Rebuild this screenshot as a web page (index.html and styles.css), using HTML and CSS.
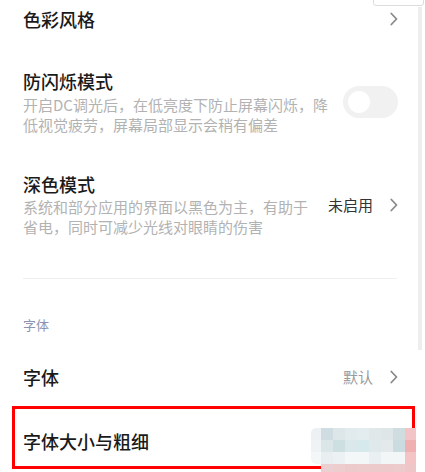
FILE: index.html
```html
<!DOCTYPE html>
<html lang="zh-CN">
<head>
<meta charset="utf-8">
<link rel="stylesheet" href="styles.css">
</head>
<body>
<div class="page">
  <div class="row row-first">
    <div class="title">色彩风格</div>
    <svg class="chev" width="8" height="14" viewBox="0 0 8 14"><path d="M1.3 1.5 L6.5 7 L1.3 12.5" fill="none" stroke="#8a8a8a" stroke-width="1.8" stroke-linecap="round" stroke-linejoin="round"/></svg>
  </div>

  <div class="row row-dc">
    <div class="col">
      <div class="title">防闪烁模式</div>
      <div class="desc">开启DC调光后，在低亮度下防止屏幕闪烁，降低视觉疲劳，屏幕局部显示会稍有偏差</div>
    </div>
    <div class="toggle"><span class="knob"></span></div>
  </div>

  <div class="row row-dark">
    <div class="col">
      <div class="title">深色模式</div>
      <div class="desc">系统和部分应用的界面以黑色为主，有助于省电，同时可减少光线对眼睛的伤害</div>
    </div>
    <div class="value value-dark">未启用</div>
    <svg class="chev" width="8" height="14" viewBox="0 0 8 14"><path d="M1.3 1.5 L6.5 7 L1.3 12.5" fill="none" stroke="#8a8a8a" stroke-width="1.8" stroke-linecap="round" stroke-linejoin="round"/></svg>
  </div>

  <div class="divider"></div>

  <div class="section">字体</div>

  <div class="row row-font">
    <div class="title">字体</div>
    <div class="value value-light">默认</div>
    <svg class="chev" width="8" height="14" viewBox="0 0 8 14"><path d="M1.3 1.5 L6.5 7 L1.3 12.5" fill="none" stroke="#8a8a8a" stroke-width="1.8" stroke-linecap="round" stroke-linejoin="round"/></svg>
  </div>

  <div class="row row-size">
    <div class="title">字体大小与粗细</div>
  </div>
</div>

<div class="topbox"></div>
<div class="scrollbar"></div>
<div class="highlight"></div>
<div class="mosaic">
  <span></span><span></span><span></span><span></span><span></span><span></span><span></span><span></span><span></span>
  <span></span><span></span><span></span><span></span><span></span><span></span><span></span><span></span><span></span>
  <span></span><span></span><span></span><span></span><span></span><span></span><span></span><span></span><span></span>
  <span></span><span></span><span></span><span></span><span></span><span></span><span></span><span></span><span></span>
</div>
</body>
</html>
```

FILE: styles.css
```css
html, body {
  margin: 0;
  padding: 0;
  background: #ffffff;
}
body {
  width: 425px;
  height: 472px;
  overflow: hidden;
  position: relative;
  font-family: "Noto Sans CJK SC", "Noto Sans", sans-serif;
}
.page {
  padding: 0 27px 0 23px;
}
.row {
  display: flex;
  align-items: center;
}
.row-first {
  height: 38px;
}
.row-dc {
  margin-top: 31px;
}
.row-dark {
  margin-top: 37px;
}
.row-font {
  margin-top: 31px;
}
.row-size {
  margin-top: 40px;
}
.title {
  font-size: 18px;
  line-height: 24px;
  font-weight: 500;
  color: #1a1a1a;
  flex: 1;
}
.col {
  flex: 1;
  min-width: 0;
}
.col .title {
  flex: none;
}
.desc {
  font-size: 15px;
  line-height: 20px;
  color: #b2b2b2;
  margin-top: 2px;
}
.row-dark .desc {
  margin-top: 1px;
}
.toggle {
  width: 55px;
  height: 32px;
  border-radius: 16px;
  background: #f1f1f1;
  margin-left: 8px;
  display: flex;
  align-items: center;
  padding-left: 5px;
  box-sizing: border-box;
}
.knob {
  width: 22px;
  height: 22px;
  border-radius: 50%;
  background: #ffffff;
}
.value {
  font-size: 15px;
  line-height: 20px;
  margin-right: 17px;
}
.value-dark {
  color: #333333;
  margin-left: 15px;
}
.value-light {
  color: #9a9a9a;
}
.chev {
  display: block;
  flex: none;
}
.divider {
  margin-top: 41px;
  height: 1px;
  background: #efefef;
  margin-right: 1px;
}
.section {
  margin-top: 37px;
  font-size: 13px;
  line-height: 18px;
  color: #8c93b0;
}
.topbox {
  position: absolute;
  left: 373px;
  top: -4px;
  width: 51px;
  height: 10px;
  border: 1px solid #dcdcdc;
  border-radius: 0 0 3px 3px;
  box-sizing: border-box;
  background: #fff;
}
.scrollbar {
  position: absolute;
  left: 418px;
  top: 7px;
  width: 4px;
  height: 343px;
  background: #eeeeee;
}
.highlight {
  position: absolute;
  left: 12px;
  top: 406px;
  width: 403px;
  height: 63px;
  border: 3px solid #ff0000;
  box-sizing: border-box;
}
.mosaic {
  position: absolute;
  left: 311px;
  top: 428px;
  display: grid;
  grid-template-columns: 10px repeat(7, 12px) 11px;
  grid-template-rows: 12px 12px 12px 8px;
}
.mosaic span:nth-child(1) { background: #eef1f3; border-radius: 5px 0 0 0; }
.mosaic span:nth-child(2) { background: #cfdde2; }
.mosaic span:nth-child(3) { background: #dde6e9; }
.mosaic span:nth-child(4) { background: #e1eaec; }
.mosaic span:nth-child(5) { background: #e3ecee; }
.mosaic span:nth-child(6) { background: #e0e8ea; }
.mosaic span:nth-child(7) { background: #dfe6e8; }
.mosaic span:nth-child(8) { background: #cfdde0; }
.mosaic span:nth-child(9) { background: #f2c4c6; }
.mosaic span:nth-child(10) { background: #f0f3f5; }
.mosaic span:nth-child(11) { background: #dbe6e9; }
.mosaic span:nth-child(12) { background: #cddfe0; }
.mosaic span:nth-child(13) { background: #dbe8eb; }
.mosaic span:nth-child(14) { background: #d6e9ec; }
.mosaic span:nth-child(15) { background: #dfe9eb; }
.mosaic span:nth-child(16) { background: #e4eaec; }
.mosaic span:nth-child(17) { background: #cadcdf; }
.mosaic span:nth-child(18) { background: #f0b0b2; }
.mosaic span:nth-child(19) { background: #f4f7f8; border-radius: 0 0 0 5px; }
.mosaic span:nth-child(20) { background: #e9eff1; }
.mosaic span:nth-child(21) { background: #ecf1f3; }
.mosaic span:nth-child(22) { background: #f3f7f8; }
.mosaic span:nth-child(23) { background: #f3f7f8; }
.mosaic span:nth-child(24) { background: #eaf0f1; }
.mosaic span:nth-child(25) { background: #f3f6f7; }
.mosaic span:nth-child(26) { background: #f3f6f7; }
.mosaic span:nth-child(27) { background: #f3c3c5; }
.mosaic span:nth-child(28) { background: transparent; }
.mosaic span:nth-child(29) { background: #eccfd1; }
.mosaic span:nth-child(30) { background: #eecdcf; }
.mosaic span:nth-child(31) { background: #ecc9cb; }
.mosaic span:nth-child(32) { background: #edcbcd; }
.mosaic span:nth-child(33) { background: #eccacc; }
.mosaic span:nth-child(34) { background: #eec9cb; }
.mosaic span:nth-child(35) { background: #edcacc; }
.mosaic span:nth-child(36) { background: #efc6c8; }
```
